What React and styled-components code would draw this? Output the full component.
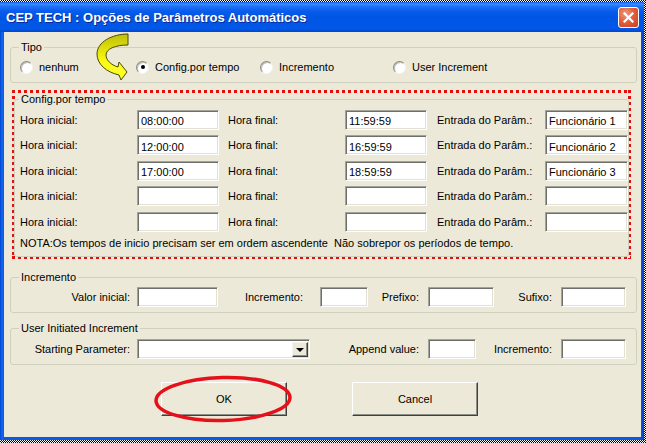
import React from 'react';
import styled, { createGlobalStyle } from 'styled-components';

const Global = createGlobalStyle`
  html, body { margin: 0; padding: 0; }
  body {
    width: 646px; height: 443px; overflow: hidden;
    font-family: "Liberation Sans", Arial, sans-serif;
  }
`;

const Frame = styled.div`
  width: 646px; height: 443px; box-sizing: border-box;
  padding: 2px 3px 3px 0;
  background: repeating-conic-gradient(#000 0 25%, #fff 0 50%) 0 0 / 2px 2px;
  display: flex;
`;

const Window = styled.div`
  flex: 1; display: flex; flex-direction: column;
  background: linear-gradient(90deg, #0046D0 0, #1467EE 2px, #0A58E6 4px, #0A58E6 calc(100% - 3px), #0042C4 100%);
`;

const TitleBar = styled.div`
  height: 30px; flex: none; box-sizing: border-box;
  display: flex; align-items: center; justify-content: space-between;
  padding: 0 5px 0 6px;
  background: linear-gradient(180deg, #0A5BEA 0, #3E8FFB 2px, #2275F6 4px, #0A5CEB 9px, #0055E4 50%, #0058E8 88%, #0047CC 100%);
`;

const TitleText = styled.span`
  color: #fff; font-weight: bold; font-size: 13px;
  text-shadow: 1px 1px 0 #0B2A98;
  white-space: nowrap;
`;

const CloseButton = styled.div`
  width: 21px; height: 21px; box-sizing: border-box;
  border: 1px solid #fff; border-radius: 3px;
  background: radial-gradient(circle at 35% 30%, #F09A7E 0, #E2603C 45%, #C7401C 100%);
  display: flex; align-items: center; justify-content: center;
`;

const Body = styled.div`
  flex: 1; position: relative;
  margin: 0 3px 3px 4px;
  background: #ECE9D8;
  display: flex; flex-direction: column;
  padding: 9px 4px 0 6px;
`;

const Group = styled.fieldset`
  margin: ${p => p.$mt || 0}px 0 0 0;
  padding: ${p => p.$pad || '0'};
  border: 1px solid #D0D0BF;
  border-radius: 3px;
  min-width: 0;
`;

const Legend = styled.legend`
  padding: 0 2px; margin-left: ${p => p.$indent ?? 8}px;
  font-size: 11px; line-height: 13px; color: #000;
`;

const RadioRow = styled.div`
  display: grid; grid-template-columns: 116px 124px 133px auto;
  height: 20px; align-items: center;
  padding-left: 9px;
`;

const RadioItem = styled.label`
  display: flex; align-items: center; gap: 6px;
  font-size: 11px; color: #000; white-space: nowrap;
`;

const RadioCircle = styled.span`
  width: 13px; height: 13px; box-sizing: border-box; border-radius: 50%;
  background: #fff;
  border: 1px solid; border-color: #8C8C86 #F4F4F0 #F4F4F0 #8C8C86;
  box-shadow: inset 1px 1px 0 #BDBDB6;
  display: flex; align-items: center; justify-content: center;
  &::after {
    content: ''; width: 4px; height: 4px; border-radius: 50%;
    background: ${p => (p.$checked ? '#000' : 'transparent')};
  }
`;

const RedFrame = styled.div`
  margin: 7px 6px 0 2px;
  padding: 3px 2px 2px 2px;
  background:
    repeating-linear-gradient(90deg, #E30E0E 0 3px, transparent 3px 6px) left top / 100% 3px no-repeat,
    repeating-linear-gradient(90deg, #E30E0E 0 3px, transparent 3px 6px) left bottom / 100% 3px no-repeat,
    repeating-linear-gradient(180deg, #E30E0E 0 3px, transparent 3px 6px) left top / 3px 100% no-repeat,
    repeating-linear-gradient(180deg, #E30E0E 0 3px, transparent 3px 6px) right top / 3px 100% no-repeat;
`;

const FieldGrid = styled.div`
  display: grid;
  grid-template-columns: ${p => p.$cols};
  grid-auto-rows: ${p => p.$row};
  align-items: center;
  padding-left: ${p => p.$pl || 0}px;
`;

const Lbl = styled.span`
  font-size: 11px; color: #000; white-space: nowrap;
  text-align: ${p => (p.$right ? 'right' : 'left')};
  padding-left: ${p => p.$pl || 0}px;
  padding-right: ${p => p.$pr || 0}px;
`;

const TextBox = styled.input`
  box-sizing: border-box; height: 20px; width: 100%; margin: 0;
  background: #fff; outline: none;
  border: 1px solid; border-color: #A3A39E #FFFFFF #FFFFFF #A3A39E;
  box-shadow: inset 1px 1px 0 #6E6E6A, inset -1px -1px 0 #E4E1D4;
  font-family: "Liberation Sans", Arial, sans-serif;
  font-size: 11px; color: #000;
  padding: 3px 0 0 3px;
`;

const ComboBox = styled.div`
  box-sizing: border-box; height: 20px; width: 100%;
  background: #fff;
  border: 1px solid; border-color: #A3A39E #FFFFFF #FFFFFF #A3A39E;
  box-shadow: inset 1px 1px 0 #6E6E6A, inset -1px -1px 0 #E4E1D4;
  display: flex; justify-content: flex-end; align-items: stretch;
  padding: 2px 1px 1px 2px;
`;

const DropButton = styled.div`
  width: 16px; box-sizing: border-box;
  background: #ECE9D8;
  border: 1px solid; border-color: #F4F3EE #404040 #404040 #F4F3EE;
  box-shadow: inset -1px -1px 0 #8E8E88;
  display: flex; align-items: center; justify-content: center;
  &::after {
    content: ''; width: 0; height: 0;
    border-left: 4px solid transparent; border-right: 4px solid transparent;
    border-top: 4px solid #000; margin-top: 2px;
  }
`;

const Note = styled.div`
  font-size: 11px; line-height: 13px; color: #000;
  padding: 2px 0 6px 5px; white-space: nowrap;
`;

const ButtonRow = styled.div`
  display: flex; gap: 65px;
  margin-top: 17px; padding-left: 151px;
`;

const Button = styled.div`
  width: 126px; height: 34px; box-sizing: border-box;
  background: #ECE9D8;
  border: 1px solid; border-color: #FFFFFF #404040 #404040 #FFFFFF;
  box-shadow: inset -1px -1px 0 #8E8E88;
  display: flex; align-items: center; justify-content: center;
  font-size: 11px; color: #000;
`;

const OkWrap = styled.div`
  position: relative;
`;

const Ellipse = styled.svg`
  position: absolute; left: -8px; top: -7px; overflow: visible;
  pointer-events: none;
`;

const Arrow = styled.svg`
  position: absolute; left: 86px; top: -2px;
  pointer-events: none;
`;

const configRows = [
  ['08:00:00', '11:59:59', 'Funcionário 1'],
  ['12:00:00', '16:59:59', 'Funcionário 2'],
  ['17:00:00', '18:59:59', 'Funcionário 3'],
  ['', '', ''],
  ['', '', ''],
];

export default function App() {
  return (
    <>
      <Global />
      <Frame>
        <Window>
          <TitleBar>
            <TitleText>CEP TECH : Opções de Parâmetros Automáticos</TitleText>
            <CloseButton>
              <svg width="11" height="11" viewBox="0 0 11 11">
                <path d="M1.5 1.5 L9.5 9.5 M9.5 1.5 L1.5 9.5" stroke="#fff" strokeWidth="2.2" strokeLinecap="square" />
              </svg>
            </CloseButton>
          </TitleBar>
          <Body>
            <Group $pad="3px 0 5px 0">
              <Legend $indent={8}>Tipo</Legend>
              <RadioRow>
                <RadioItem><RadioCircle />nenhum</RadioItem>
                <RadioItem><RadioCircle $checked />Config.por tempo</RadioItem>
                <RadioItem><RadioCircle />Incremento</RadioItem>
                <RadioItem><RadioCircle />User Increment</RadioItem>
              </RadioRow>
            </Group>

            <RedFrame>
              <Group $pad="1px 0 0 0">
                <Legend $indent={4}>Config.por tempo</Legend>
                <FieldGrid $cols="117px 82px 126px 82px 118px 83px" $row="25.5px" $pl={5}>
                  {configRows.map((r, i) => (
                    <React.Fragment key={i}>
                      <Lbl>Hora inicial:</Lbl>
                      <TextBox readOnly value={r[0]} />
                      <Lbl $pl={9}>Hora final:</Lbl>
                      <TextBox readOnly value={r[1]} />
                      <Lbl $pl={10}>Entrada do Parâm.:</Lbl>
                      <TextBox readOnly value={r[2]} />
                    </React.Fragment>
                  ))}
                </FieldGrid>
                <Note>NOTA:Os tempos de inicio precisam ser em ordem ascendente&nbsp; Não sobrepor os períodos de tempo.</Note>
              </Group>
            </RedFrame>

            <Group $mt={12} $pad="2px 0 4px 0">
              <Legend $indent={8}>Incremento</Legend>
              <FieldGrid $cols="126px 81px 102px 48px 60px 66px 67px 65px" $row="22px">
                <Lbl $right $pr={7}>Valor inicial:</Lbl>
                <TextBox readOnly value="" />
                <Lbl $right $pr={17}>Incremento:</Lbl>
                <TextBox readOnly value="" />
                <Lbl $right $pr={9}>Prefixo:</Lbl>
                <TextBox readOnly value="" />
                <Lbl $right $pr={9}>Sufixo:</Lbl>
                <TextBox readOnly value="" />
              </FieldGrid>
            </Group>

            <Group $mt={9} $pad="3px 0 4px 0">
              <Legend $indent={8}>User Initiated Increment</Legend>
              <FieldGrid $cols="126px 173px 118px 48px 85px 65px" $row="22px">
                <Lbl $right $pr={7}>Starting Parameter:</Lbl>
                <ComboBox><DropButton /></ComboBox>
                <Lbl $right $pr={9}>Append value:</Lbl>
                <TextBox readOnly value="" />
                <Lbl $right $pr={9}>Incremento:</Lbl>
                <TextBox readOnly value="" />
              </FieldGrid>
            </Group>

            <ButtonRow>
              <OkWrap>
                <Button>OK</Button>
                <Ellipse width="140" height="48" viewBox="0 0 140 48">
                  <ellipse cx="70" cy="24" rx="67" ry="21.5" fill="none" stroke="#E5101A" strokeWidth="3.5" transform="rotate(-1.5 70 24)" />
                </Ellipse>
              </OkWrap>
              <Button>Cancel</Button>
            </ButtonRow>

            <Arrow width="50" height="55" viewBox="0 0 50 55">
              <defs>
                <linearGradient id="arrowFill" x1="0" y1="0" x2="0" y2="1">
                  <stop offset="0" stopColor="#BDBD10" />
                  <stop offset="0.4" stopColor="#E8E80A" />
                  <stop offset="0.6" stopColor="#FAFA14" />
                  <stop offset="1" stopColor="#FFFF30" />
                </linearGradient>
              </defs>
              <path
                d="M38,4 C22,4 7,12 7,24 C7,34 16,42 29,45 L31,50 L37,42 L29,32 L28,37 C21,35 16,30 16,25 C16,19 25,15 38,15 Z"
                fill="url(#arrowFill)" stroke="#4A4A00" strokeWidth="1" strokeLinejoin="round"
              />
            </Arrow>
          </Body>
        </Window>
      </Frame>
    </>
  );
}
